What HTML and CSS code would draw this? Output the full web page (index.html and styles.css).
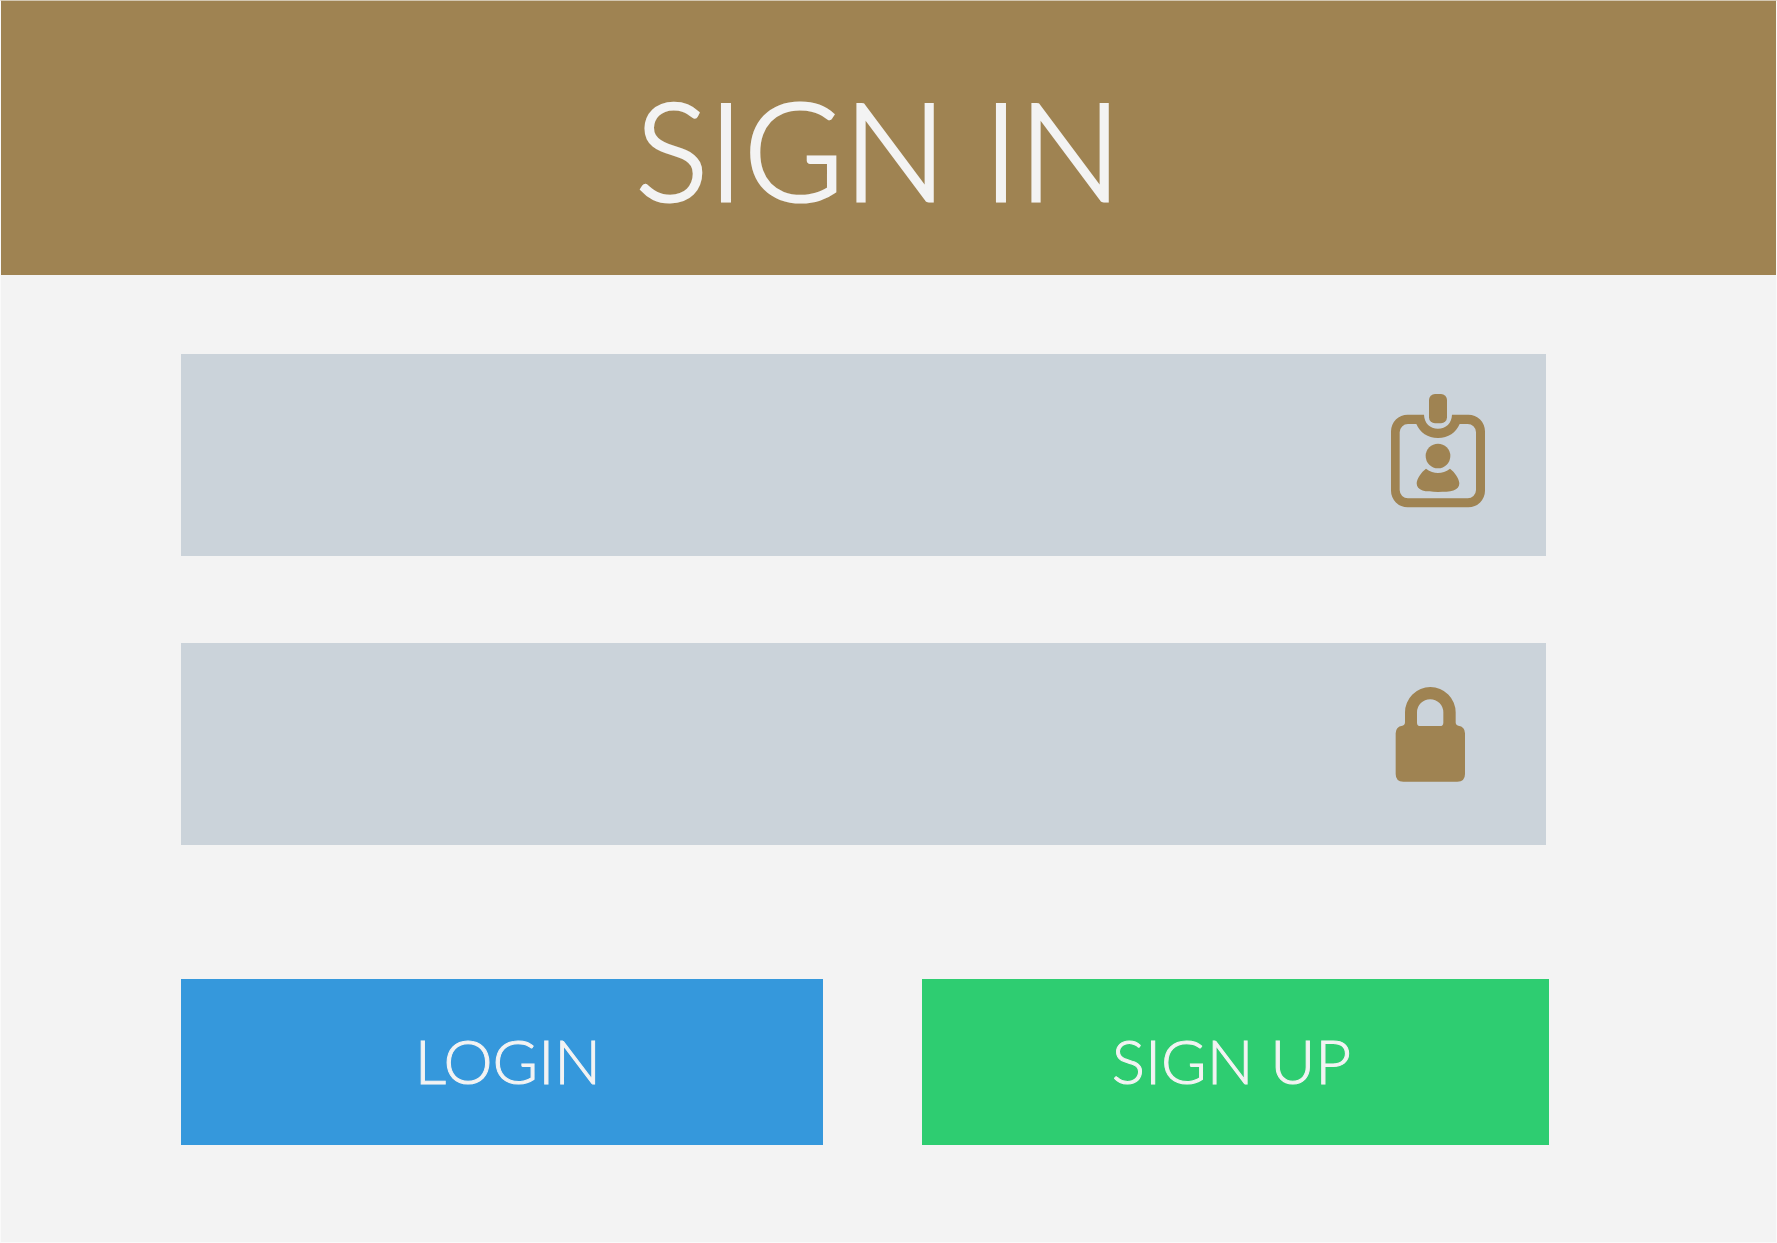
FILE: index.html
```html
<!DOCTYPE html>
<html lang="en">
<head>
  <meta charset="utf-8">
  <meta name="viewport" content="width=device-width, initial-scale=1">
  <title>Sign in</title>
  <link rel="stylesheet" href="styles.css">
</head>
<body>
  <main class="panel">
    <header class="panel-header">
      <h1 class="title">SIGN IN</h1>
    </header>
    <form class="form">
      <label class="field">
        <input class="field-input" type="text" name="user" aria-label="User name" autocomplete="username">
        <svg class="icon icon-badge" viewBox="63 42 282 342" aria-hidden="true">
          <rect x="177" y="42" width="54" height="88" rx="18"/>
          <path fill-rule="evenodd" d="M113 104H162C163 130 180 146 204 146S245 130 246 104H295A50 50 0 0 1 345 154V332A50 50 0 0 1 295 382H113A50 50 0 0 1 63 332V154A50 50 0 0 1 113 104ZM139 132H114A25 25 0 0 0 89 157V330A25 25 0 0 0 114 355H292A25 25 0 0 0 318 330V157A25 25 0 0 0 292 132H269C258 158 235 174 204 174S150 158 139 132Z"/>
          <circle cx="204" cy="228" r="37"/>
          <path d="M168 266Q186 279 204 279T240 266C254 276 268 297 268 310C268 333 242 336 204 336S140 333 140 310C140 297 154 276 168 266Z"/>
        </svg>
      </label>
      <label class="field">
        <input class="field-input" type="password" name="password" aria-label="Password" autocomplete="current-password">
        <svg class="icon icon-lock" viewBox="75 51 210 285" aria-hidden="true">
          <path fill-rule="evenodd" d="M105 127A76 76 0 0 1 257 127V157Q257 166 265 167Q285 170 285 190V312Q285 335 262 335H100Q77 335 77 312V190Q77 170 97 167Q105 166 105 157ZM141 127V158Q141 168 151 168H210Q220 168 220 158V127A39 39 0 0 0 141 127Z"/>
        </svg>
      </label>
      <div class="actions">
        <button class="button button-login" type="submit">LOGIN</button>
        <button class="button button-signup" type="button">SIGN UP</button>
      </div>
    </form>
  </main>
</body>
</html>
```
FILE: styles.css
```css
* {
  box-sizing: border-box;
}

body {
  margin: 0;
  background: #f3f3f3;
  color: #f3f3f3;
  font-family: Lato, "Open Sans", sans-serif;
  font-weight: 300;
}

.panel {
  min-height: 100vh;
  border: 1px solid #fafafa;
  border-top-color: #d3c7b2;
}

.panel-header {
  padding: 79px 20px 57px 0;
  background: #9f8352;
  text-align: center;
}

.title {
  margin: 0;
  font-size: 136px;
  font-weight: 300;
  line-height: 138px;
  -webkit-text-stroke: 3px currentColor;
}

.form {
  display: flex;
  flex-direction: column;
  gap: 87px;
  padding: 79px 227px 96px 180px;
}

.field {
  display: flex;
  align-items: flex-start;
  height: 202px;
  margin-right: 3px;
  background: #cbd3da;
}

.field-input {
  flex: 1;
  min-width: 0;
  height: 100%;
  padding: 0 48px;
  border: 0;
  outline: 0;
  background: transparent;
  color: #9f8352;
  font: inherit;
  font-size: 62px;
}

.icon {
  flex: none;
  fill: #9f8352;
}

.icon-badge {
  width: 94px;
  height: 114px;
  margin: 40px 61px 0 0;
}

.icon-lock {
  width: 70px;
  height: 95px;
  margin: 44px 81px 0 0;
}

.actions {
  display: grid;
  grid-template-columns: 642fr 627fr;
  gap: 99px;
  margin-top: 47px;
}

.button {
  height: 166px;
  padding: 0 0 4px;
  border: 0;
  color: inherit;
  font: inherit;
  font-size: 62px;
  line-height: 62px;
  -webkit-text-stroke: 1px currentColor;
  cursor: pointer;
}

.button-login {
  padding-left: 12px;
  background: #3598dc;
}

.button-signup {
  padding-right: 8px;
  background: #2ecd71;
}
```
